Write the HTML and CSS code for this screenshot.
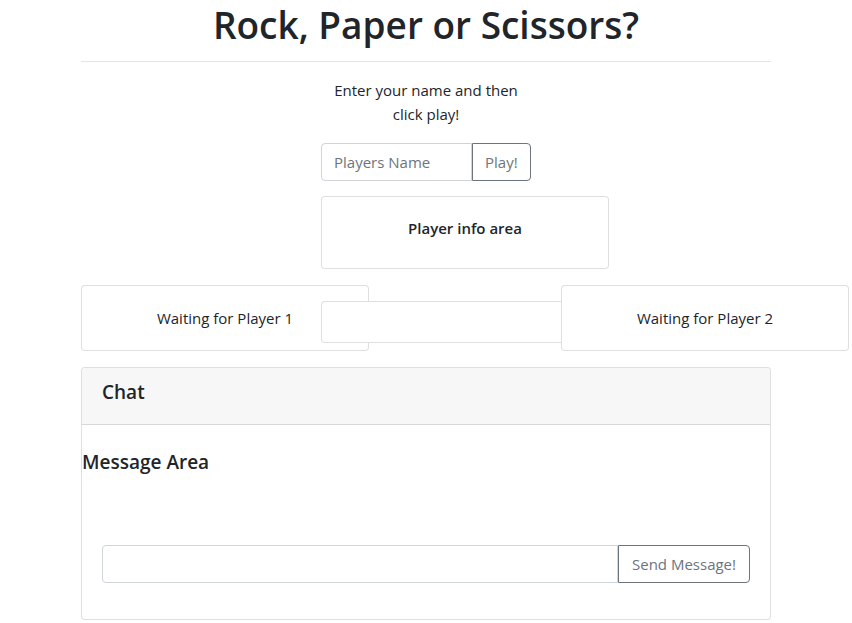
FILE: index.html
```html
<!DOCTYPE html>
<html lang="en">
<head>
<meta charset="utf-8">
<title>Rock, Paper or Scissors?</title>
<link rel="stylesheet" href="styles.css">
</head>
<body>
<div class="container">
  <h1 class="title">Rock, Paper or Scissors?</h1>
  <hr class="rule">

  <div class="grid3">
    <div></div>
    <div class="join">
      <p class="intro">Enter your name and then click play!</p>
      <div class="input-group">
        <input class="field" type="text" placeholder="Players Name">
        <button class="btn">Play!</button>
      </div>
      <div class="card info-card">
        <h6 class="info-title">Player info area</h6>
      </div>
    </div>
    <div></div>
  </div>

  <div class="grid3 players">
    <div class="card player-card">Waiting for Player 1</div>
    <div class="card middle-box"></div>
    <div class="card player-card">Waiting for Player 2</div>
  </div>

  <div class="card chat">
    <div class="chat-header"><h5 class="chat-title">Chat</h5></div>
    <h5 class="msg-area">Message Area</h5>
    <div class="chat-body">
      <div class="input-group">
        <input class="field grow" type="text">
        <button class="btn">Send Message!</button>
      </div>
    </div>
  </div>
</div>
</body>
</html>
```

FILE: styles.css
```css
* { box-sizing: border-box; }
body {
  margin: 0;
  font-family: "Open Sans", "Noto Sans", sans-serif;
  font-size: 15px;
  line-height: 24px;
  color: #212529;
  background: #fff;
}
.container {
  width: 690px;
  margin: 0 auto;
}
.title {
  margin: 0;
  padding-top: 1px;
  height: 48px;
  font-size: 37px;
  line-height: 48px;
  font-weight: 600;
  text-align: center;
}
.rule {
  margin: 13px 0 16px;
  border: 0;
  border-top: 1px solid rgba(0,0,0,.1);
}
.grid3 {
  display: grid;
  grid-template-columns: 210px 210px 210px;
  column-gap: 30px;
}
.intro {
  margin: 0 auto;
  width: 190px;
  text-align: center;
}
.input-group {
  display: flex;
  height: 38px;
  margin-top: 17px;
}
.field {
  width: 151px;
  height: 38px;
  padding: 6px 12px;
  font: inherit;
  color: #495057;
  border: 1px solid #ced4da;
  border-radius: 4px 0 0 4px;
  outline: none;
}
.field::placeholder { color: #6c757d; }
.grow { flex: 1; }
.btn {
  height: 38px;
  padding: 6px 12px;
  font: inherit;
  color: #6c757d;
  background: #fff;
  border: 1px solid #6c757d;
  border-radius: 0 4px 4px 0;
}
.chat .btn { width: 132px; padding: 6px 10px; }
.card {
  background: #fff;
  border: 1px solid rgba(0,0,0,.125);
  border-radius: 4px;
}
.info-card {
  width: 288px;
  height: 73px;
  margin-top: 15px;
  padding: 19px 20px;
  text-align: center;
}
.info-title {
  margin: 0;
  font-size: 15px;
  line-height: 24px;
  font-weight: 600;
}
.players {
  margin-top: 16px;
  align-items: start;
}
.player-card {
  width: 288px;
  height: 66px;
  padding: 20px;
  text-align: center;
}
.middle-box {
  width: 288px;
  height: 42px;
  margin-top: 16px;
}
.chat {
  margin-top: 16px;
  height: 253px;
}
.chat-header {
  height: 57px;
  padding: 12px 20px;
  background: #f7f7f7;
  border-bottom: 1px solid rgba(0,0,0,.125);
  border-radius: 4px 4px 0 0;
}
.chat-title {
  margin: 0;
  font-size: 19px;
  line-height: 24px;
  font-weight: 600;
}
.msg-area {
  margin: 25px 0 0;
  font-size: 19px;
  line-height: 24px;
  font-weight: 600;
}
.chat-body {
  padding: 54px 20px 0;
}
```
